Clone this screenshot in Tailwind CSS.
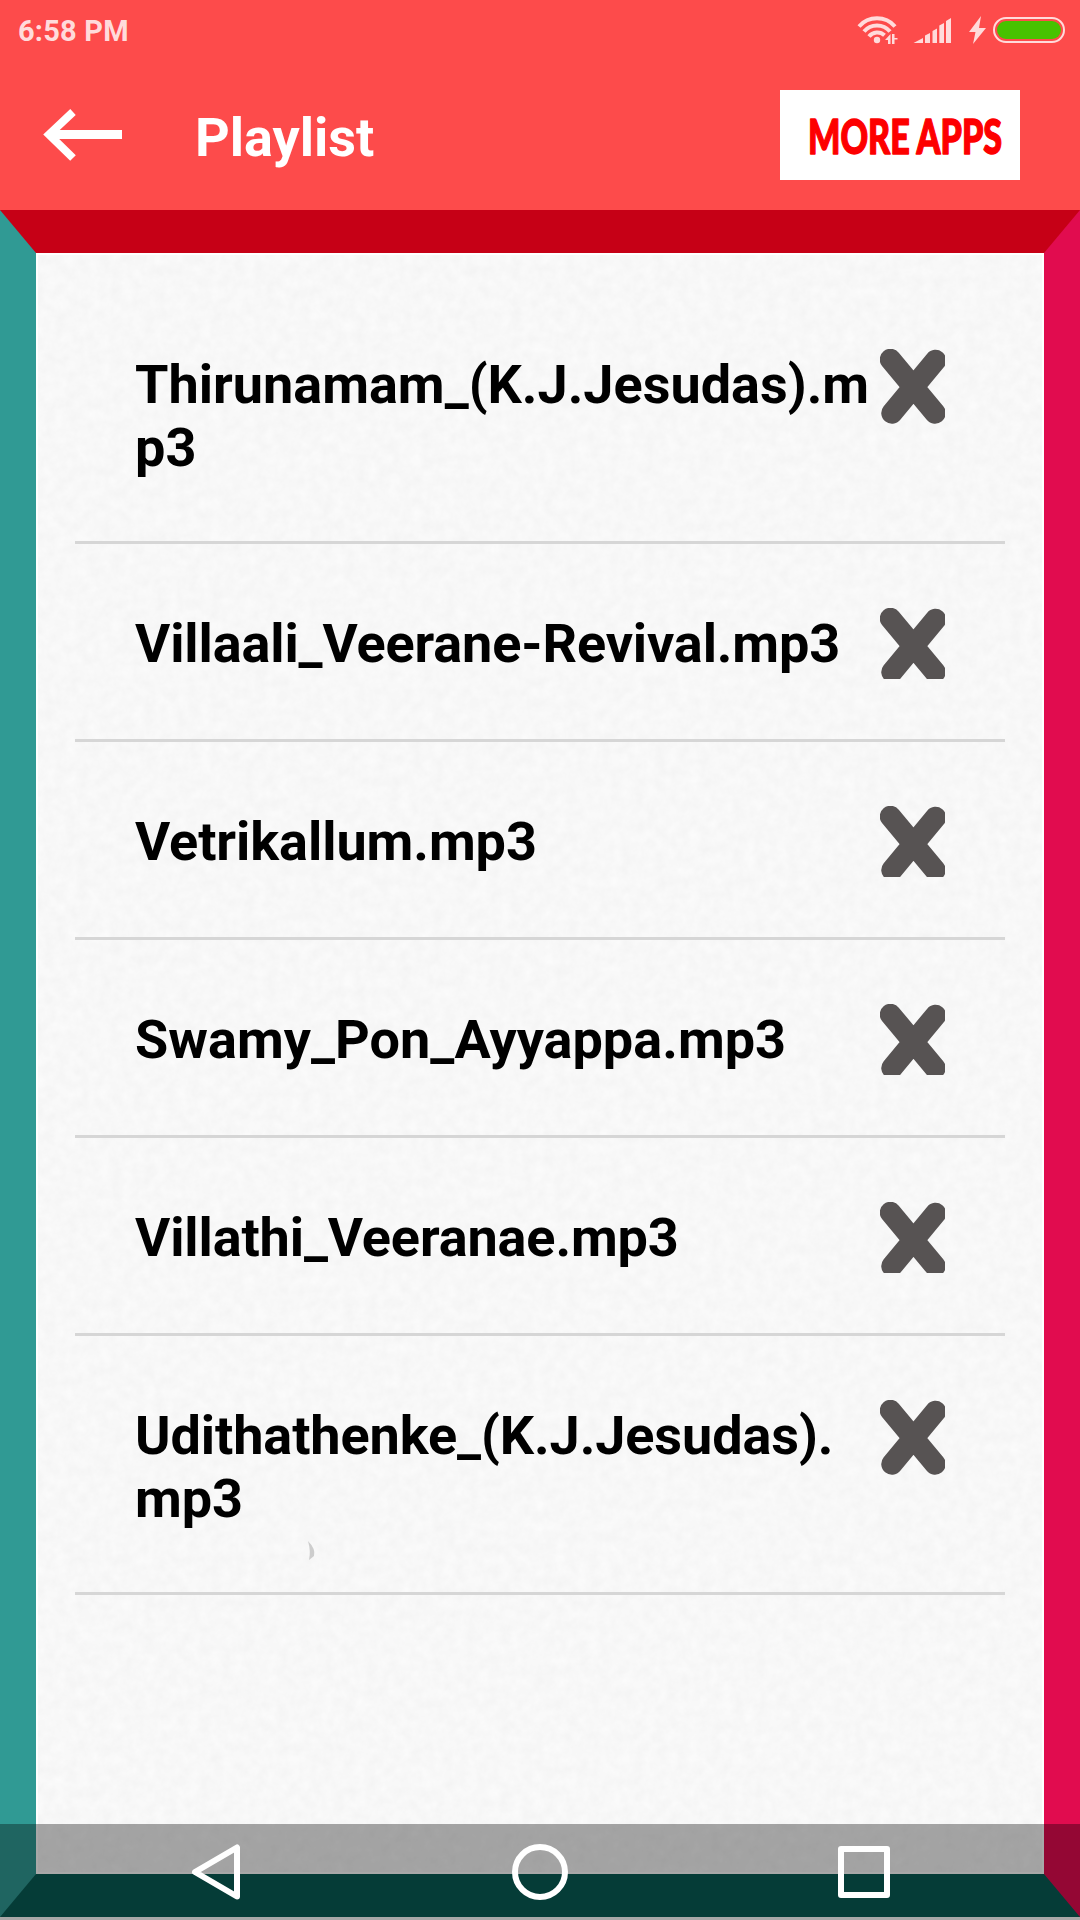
<!DOCTYPE html>
<html lang="en">
<head>
    <meta charset="UTF-8">
    <meta name="viewport" content="width=device-width, initial-scale=1.0">
    <title>Playlist</title>
    <script src="https://cdn.jsdelivr.net/npm/@tailwindcss/browser@4"></script>
</head>
<body class="relative w-[1080px] h-[1920px] overflow-hidden flex flex-col bg-white font-['Roboto',sans-serif]">
    <!-- Header -->
    <header class="h-[210px] shrink-0 bg-[#fd4b4b] text-white">
        <!-- Status bar -->
        <div class="h-[60px] flex items-center justify-between pl-[18px] pr-[15px] text-[#ffdbdb]">
            <span class="text-[29px] leading-none font-bold tracking-[0.2px] pt-[2px]">6:58 PM</span>
            <div class="flex items-center">
                <svg class="w-[138px] h-[30px]" viewBox="0 0 138 30" fill="none">
                    <!-- Wifi -->
                    <g stroke="currentColor" stroke-width="4">
                        <path d="M4 11.500a24 24 0 0 1 36 0"/>
                        <path d="M9 16.500a17 17 0 0 1 26 0"/>
                        <path d="M14 21.500a10.500 10.500 0 0 1 15.500-1.200"/>
                    </g>
                    <circle cx="22" cy="25" r="3.200" fill="currentColor"/>
                    <path d="M35.500 19v10h-2.500v-4h-3zM37 29V19h2.500v4h3v1.500h-3V29z" fill="currentColor"/>
                    <!-- Signal -->
                    <path d="M58.500 28l9.500-5v5zM70 20.500l5-2.500v10h-5zM77.500 16l4.500-2.500V28h-4.500zM84.300 10.500l4.700-2.500v20h-4.700zM91 6l5-3v25h-5z" fill="currentColor"/>
                    <!-- Charging -->
                    <path d="M126 1L114 17h6.500L118 29 131 13h-7z" fill="currentColor"/>
                </svg>
                <!-- Battery -->
                <div class="w-[72px] h-[26px] rounded-full border-2 border-[#ffdbdb] p-[2px]">
                    <div class="w-full h-full rounded-full bg-[#46c200]"></div>
                </div>
            </div>
        </div>
        <div class="h-[150px] flex items-center justify-between pl-[43px] pr-[60px]">
            <div class="flex items-center">
                <svg class="w-[80px] h-[54px]" viewBox="0 0 80 54" fill="none" stroke="#fff">
                    <path d="M30 4L6 26.500l24 23.500" stroke-width="8"/>
                    <path d="M6 26.500h73" stroke-width="9"/>
                </svg>
                <h1 class="ml-[72px] text-[54px] leading-[63px] font-bold pt-1">Playlist</h1>
            </div>
            <svg class="w-[240px] h-[90px] bg-white overflow-visible" viewBox="0 0 240 90">
                <text x="28" y="63.500" font-family="Lato" font-weight="900" font-size="48" fill="#fd0000" stroke="#fd0000" stroke-width="1.500" stroke-linejoin="round" textLength="194" lengthAdjust="spacingAndGlyphs">MORE APPS</text>
            </svg>
        </div>
    </header>

    <main class="relative h-[1710px]">
        <!-- Bevelled frame with the paper sheet inside -->
        <svg class="absolute inset-0 w-[1080px] h-[1710px]" viewBox="0 0 1080 1710">
            <defs>
                <filter id="paper" x="0" y="0" width="100%" height="100%" color-interpolation-filters="sRGB">
                    <feTurbulence type="fractalNoise" baseFrequency="0.09" numOctaves="3" seed="4"/>
                    <feColorMatrix values="0.035 0 0 0 0.953  0.035 0 0 0 0.953  0.035 0 0 0 0.953  0 0 0 0 1"/>
                </filter>
            </defs>
            <path d="M0 0h1080v60H0z" fill="#c60016"/>
            <path d="M0 1640h1080v67H0z" fill="#085c54"/>
            <path d="M0 0l36 43v1621L0 1707z" fill="#309a94"/>
            <path d="M1080 0l-36 43v1621l36 43z" fill="#e10c4f"/>
            <rect x="36" y="43" width="1008" height="1621" filter="url(#paper)"/>
            <rect x="37" y="44" width="1006" height="1619" fill="none" stroke="#fff" stroke-width="2"/>
            <path d="M308 1331q8 8 6 15l-5 4q2-9-1-19z" fill="#cdcdcd"/>
        </svg>

        <!-- Songs -->
        <ul id="songs" class="relative pt-[75px] px-[75px]"></ul>
    </main>

    <!-- System navigation -->
    <nav class="absolute bottom-0 left-0 w-full h-24 bg-black/34 flex items-center justify-center">
        <svg class="w-[324px] h-24" viewBox="0 0 324 96" fill="none" stroke="#fff" stroke-width="6" stroke-linejoin="round">
            <path d="M183 23.500v49L141 48z"/>
        </svg>
        <svg class="w-[324px] h-24" viewBox="0 0 324 96" fill="none" stroke="#fff" stroke-width="6">
            <circle cx="162" cy="48" r="25"/>
        </svg>
        <svg class="w-[324px] h-24" viewBox="0 0 324 96" fill="none" stroke="#fff" stroke-width="6" stroke-linejoin="round">
            <rect x="139" y="25" width="46" height="46"/>
        </svg>
    </nav>

    <script>
        const songs = [
            { lines: ['Thirunamam_(K.J.Jesudas).m', 'p3'], tracking: 'tracking-normal' },
            { lines: ['Villaali_Veerane-Revival.mp3'], tracking: 'tracking-[-0.12px]' },
            { lines: ['Vetrikallum.mp3'], tracking: 'tracking-[-0.06px]' },
            { lines: ['Swamy_Pon_Ayyappa.mp3'], tracking: 'tracking-[0.04px]' },
            { lines: ['Villathi_Veeranae.mp3'], tracking: 'tracking-[-0.12px]' },
            { lines: ['Udithathenke_(K.J.Jesudas).', 'mp3'], tracking: 'tracking-[-0.09px]' }
        ];

        document.getElementById('songs').innerHTML = songs.map(({ lines, tracking }) => {
            const tall = lines.length > 1;
            return `
            <li class="flex items-start border-b-3 border-[#d6d6d6] pl-[60px] ${tall ? 'h-[259px]' : 'h-[198px]'}">
                <div class="w-[745px] pt-[68px] text-[54px] leading-[63px] font-bold text-black whitespace-nowrap ${tracking}">${lines.join('<br>')}</div>
                <button class="mt-16">
                    <svg class="w-[65px] ${tall ? 'h-[75px]' : 'h-[71px]'}" viewBox="0 0 65 ${tall ? 75 : 71}" fill="none" stroke="#575353" stroke-width="21.500" stroke-linecap="round">
                        <path d="M10.500 10.500L55 64M55.500 11.500L12 64"/>
                    </svg>
                </button>
            </li>`;
        }).join('');
    </script>
</body>
</html>
